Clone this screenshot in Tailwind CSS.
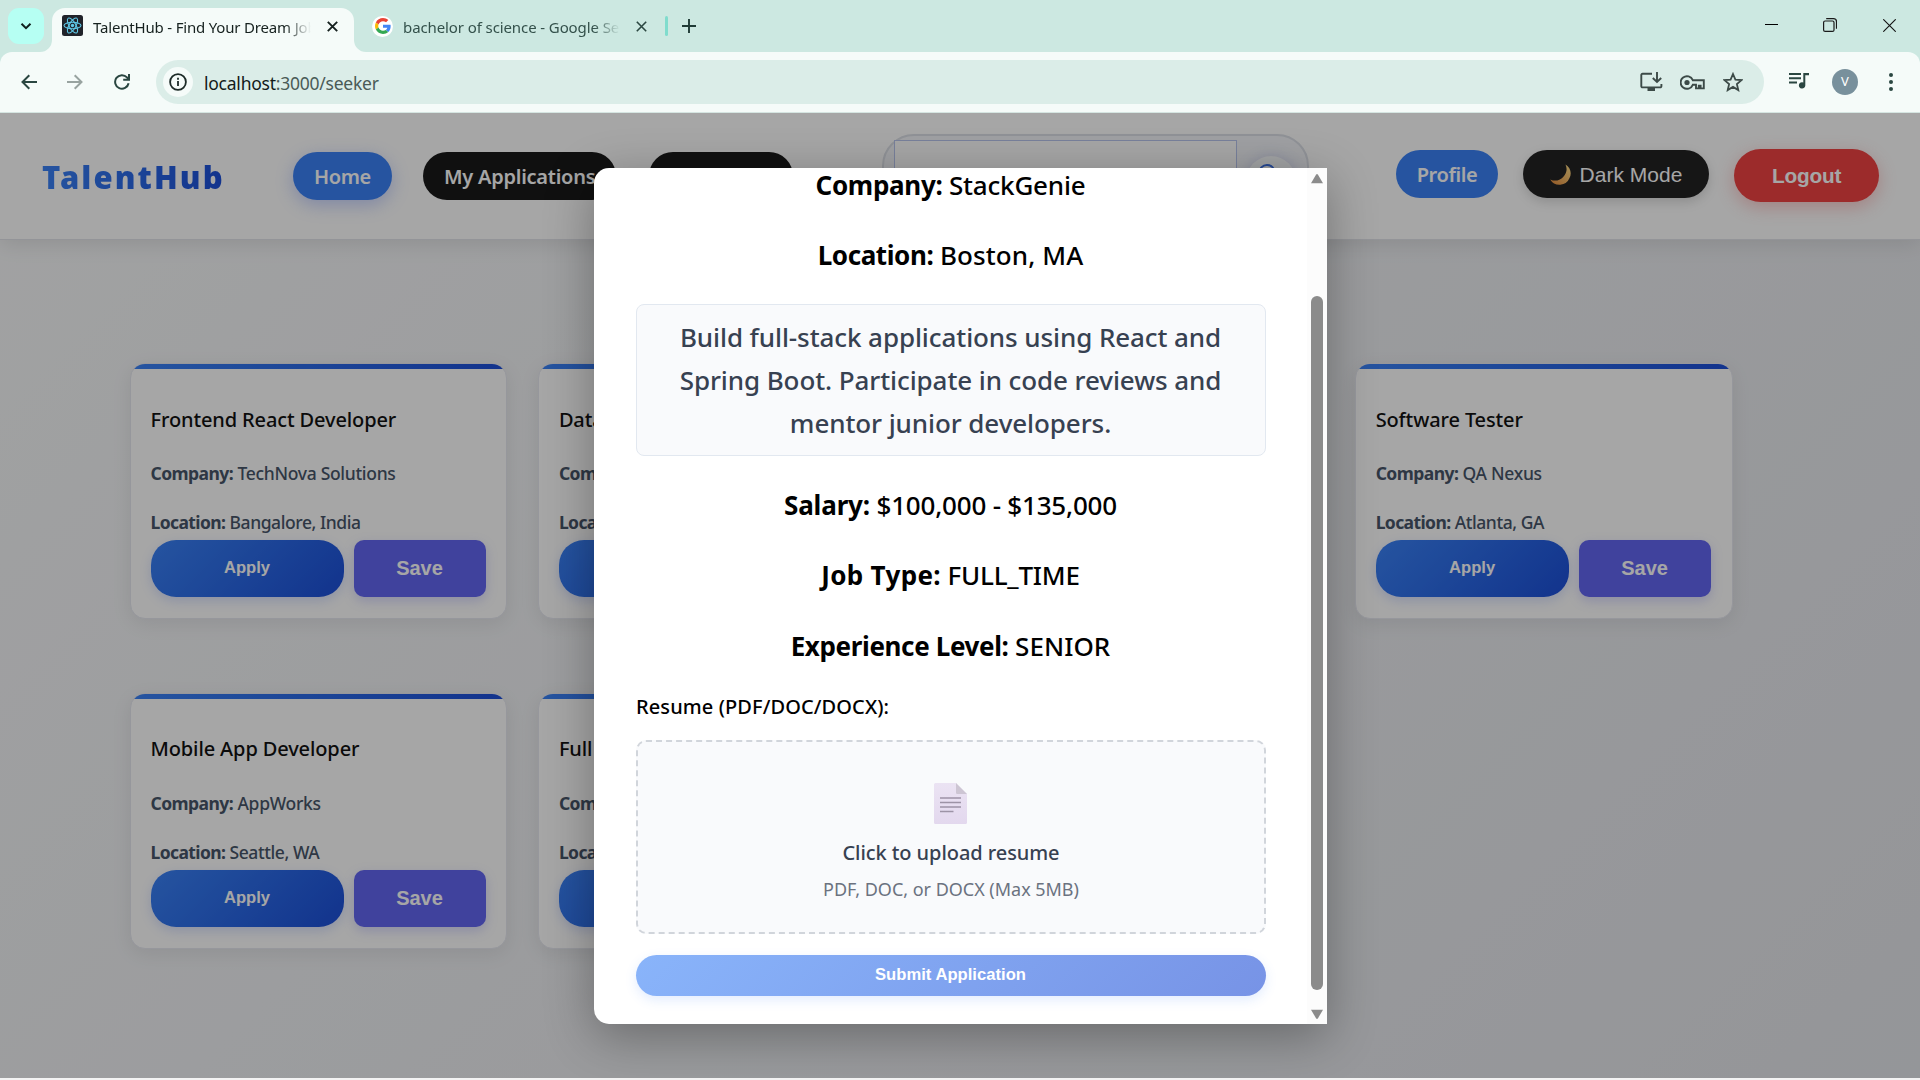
<!DOCTYPE html>
<html lang="en">
<head>
<meta charset="utf-8">
<title>TalentHub - Find Your Dream Job</title>
<script src="https://cdn.jsdelivr.net/npm/@tailwindcss/browser@4"></script>
</head>
<body class="flex h-[1080px] w-[1920px] flex-col overflow-hidden bg-[#f3f3f3] font-['Noto_Sans',sans-serif] whitespace-nowrap">

<!-- Tab strip -->
<div class="flex h-[52px] shrink-0 items-start bg-[#cce8e1] pt-2 pl-2">
  <div class="flex h-9 w-9 items-center justify-center rounded-[11px] bg-[#b6fff3]">
    <svg class="size-3" viewBox="0 0 12 12" fill="none" stroke="#10201d" stroke-width="2"><path d="M1.5 3.8 6 8.2l4.500-4.400"/></svg>
  </div>
  <div class="relative ml-2 flex h-11 w-[302px] items-center rounded-t-[13px] bg-[#f5fbf9] pb-4 pl-[10px] pt-0">
    <svg class="absolute bottom-0 -left-3 size-3" viewBox="0 0 12 12" fill="#f5fbf9"><path d="M12 0v12H0A12 12 0 0 0 12 0z"/></svg>
    <svg class="absolute bottom-0 -right-3 size-3" viewBox="0 0 12 12" fill="#f5fbf9"><path d="M0 0v12h12A12 12 0 0 1 0 0z"/></svg>
    <svg class="mt-[7px] h-[21px] w-[21px] shrink-0" viewBox="0 0 21 21"><rect width="21" height="21" rx="2.500" fill="#20232a"/><g fill="none" stroke="#5fc9e8" stroke-width="1.100"><ellipse cx="10.500" cy="10.500" rx="8.500" ry="3.300"/><ellipse cx="10.500" cy="10.500" rx="8.500" ry="3.300" transform="rotate(60 10.500 10.500)"/><ellipse cx="10.500" cy="10.500" rx="8.500" ry="3.300" transform="rotate(120 10.500 10.500)"/></g><circle cx="10.500" cy="10.500" r="1.700" fill="#5fc9e8"/></svg>
    <span class="mt-[9px] ml-[10px] w-[218px] overflow-hidden text-[15px] leading-6 tracking-[-0.18px] text-[#16211f] [mask-image:linear-gradient(to_right,black_88%,transparent)]">TalentHub - Find Your Dream Job</span>
    <svg class="mt-[8px] ml-[16px] size-[11px]" viewBox="0 0 11 11" stroke="#16211f" stroke-width="1.900"><path d="m.8.8 9.400 9.400M10.200.8.8 10.200"/></svg>
  </div>
  <div class="flex h-9 items-center pl-[18px]">
    <div class="flex size-[21px] items-center justify-center rounded-full bg-white">
      <svg class="size-[16px]" viewBox="0 0 48 48"><path fill="#EA4335" d="M24 9.500c3.540 0 6.710 1.220 9.210 3.600l6.850-6.850C35.900 2.380 30.470 0 24 0 14.620 0 6.510 5.380 2.560 13.220l7.980 6.190C12.430 13.720 17.740 9.500 24 9.500z"/><path fill="#4285F4" d="M46.980 24.550c0-1.570-.15-3.090-.38-4.550H24v9.020h12.940c-.58 2.960-2.260 5.480-4.780 7.180l7.730 6c4.510-4.180 7.090-10.360 7.090-17.650z"/><path fill="#FBBC05" d="M10.530 28.590c-.48-1.450-.76-2.990-.76-4.590s.27-3.140.76-4.590l-7.980-6.190C.92 16.460 0 20.120 0 24c0 3.880.92 7.540 2.560 10.780l7.970-6.190z"/><path fill="#34A853" d="M24 48c6.480 0 11.930-2.130 15.890-5.810l-7.730-6c-2.150 1.450-4.920 2.300-8.160 2.300-6.260 0-11.570-4.220-13.470-9.910l-7.980 6.190C6.510 42.620 14.620 48 24 48z"/></svg>
    </div>
    <span class="mt-[2px] ml-[10px] w-[217px] overflow-hidden text-[15px] leading-6 tracking-[-0.1px] text-[#34514b] [mask-image:linear-gradient(to_right,black_88%,transparent)]">bachelor of science - Google Search</span>
    <svg class="ml-[16px] size-[11px]" viewBox="0 0 11 11" stroke="#2b4741" stroke-width="1.600"><path d="m.8.8 9.400 9.400M10.200.8.8 10.200"/></svg>
    <div class="ml-[18px] h-5 w-[3px] rounded bg-[#80dccd]"></div>
    <svg class="ml-[14px] size-[14px]" viewBox="0 0 14 14" stroke="#1f3b36" stroke-width="1.900"><path d="M7 0v14M0 7h14"/></svg>
  </div>
  <div class="ml-auto flex h-[34px] items-center pr-[24px]">
    <svg class="h-[13px] w-[13px]" viewBox="0 0 13 13" stroke="#000" stroke-width="1"><path d="M0 5.500h13"/></svg>
    <svg class="ml-[45px] size-[14px]" viewBox="0 0 14 14" fill="none" stroke="#1a1a1a" stroke-width="1.200"><rect x=".6" y="3" width="10.400" height="10.400" rx="1.500"/><path d="M3.200.7h7.300a3 3 0 0 1 3 3v7"/></svg>
    <svg class="ml-[46px] size-[13px]" viewBox="0 0 13 13" stroke="#111" stroke-width="1.100"><path d="m.3.300 12.400 12.400M12.700.3.300 12.700"/></svg>
  </div>
</div>

<!-- Toolbar -->
<div class="h-[61px] shrink-0 bg-[#cce8e1]">
  <div class="flex h-[61px] items-center rounded-t-xl border-b border-[#d5e5e1] bg-[#f5fbf9]">
    <svg class="ml-[21px] size-4" viewBox="0 0 16 16" fill="none" stroke="#2a4641" stroke-width="2"><path d="M16 8H1.500M8.300 1.200 1.500 8l6.800 6.800"/></svg>
    <svg class="ml-[30px] size-4" viewBox="0 0 16 16" fill="none" stroke="#98a3a0" stroke-width="2"><path d="M0 8h14.500M7.700 1.200 14.500 8l-6.800 6.800"/></svg>
    <svg class="ml-[31px] size-4" viewBox="0 0 16 16" fill="none" stroke="#2a4641" stroke-width="2"><path d="M14.600 9.300A6.800 6.800 0 1 1 13 3.400L14.800 5.400M15 0v5.800H9.200"/></svg>
    <div class="ml-[26px] flex h-11 w-[1608px] items-center rounded-full bg-[#dbede8] pl-[7px]">
      <div class="flex size-[30px] items-center justify-center rounded-full bg-[#f5fbf9]">
        <svg class="size-[18px]" viewBox="0 0 18 18" fill="none" stroke="#1c2a27" stroke-width="1.800"><circle cx="9" cy="9" r="7.900"/><path d="M9 8v5M9 4.800v1.900"/></svg>
      </div>
      <span class="mt-px ml-[11px] text-[17.5px] leading-6 tracking-[-0.24px] text-[#4a5b57]"><span class="text-[#131b19]">localhost</span>:3000/seeker</span>
      <svg class="ml-auto h-[20px] w-[23px]" viewBox="0 0 23 20" fill="none" stroke="#3c4a47" stroke-width="1.900"><path d="M12 1.800H2.500a1.200 1.200 0 0 0-1.200 1.200v11.200a1.200 1.200 0 0 0 1.200 1.200h17.700a1.200 1.200 0 0 0 1.200-1.200V12"/><path d="M17 0v9.500M12.800 6 17 10l4.200-4"/><path d="M7.500 17.500h7.500" stroke-width="3"/></svg>
      <svg class="ml-[17px] h-[15px] w-[25px]" viewBox="0 0 25 15" fill="none" stroke="#3c4a47" stroke-width="1.900"><path d="M12.800 5.200A6.300 6.300 0 1 0 12.800 9.800H16v3.600h2.800v-2.800h1.800v2.800h3.200V5.200z"/><circle cx="7" cy="7.500" r="2.600" fill="#3c4a47" stroke="none"/></svg>
      <svg class="mr-[21px] ml-[18px] size-5" viewBox="0 0 20 20" fill="none" stroke="#3c4a47" stroke-width="1.800"><path d="m10 2 2.400 5.600 6.100.5-4.600 4 1.400 6L10 14.900 4.700 18.100l1.400-6-4.600-4 6.100-.5z"/></svg>
    </div>
    <svg class="mb-[3px] ml-[25px] h-[17px] w-[20px]" viewBox="0 0 20 17" fill="#2a4641"><path d="M0 1h12v2H0zM0 5.200h12v2H0zM0 9.400h8v2H0zM14.300 1H20v2.200h-3.700v10.200a3.200 3.200 0 1 1-2-3z"/></svg>
    <div class="ml-[23px] flex size-[26px] items-center justify-center rounded-full bg-[#78909c] text-[13px] text-white">V</div>
    <svg class="ml-[31px] h-[18px] w-1" viewBox="0 0 4 18" fill="#2a4641"><circle cx="2" cy="2" r="2"/><circle cx="2" cy="9" r="2"/><circle cx="2" cy="16" r="2"/></svg>
  </div>
</div>

<!-- Page -->
<div class="relative h-[965px] shrink-0 overflow-hidden bg-linear-135 from-[#f8f9fa] to-[#e4e6eb]">
  <nav class="flex h-[127px] items-center border-b border-[#e2e4ea] bg-white pl-[42px] shadow-[0_4px_20px_rgba(0,0,0,0.1)]">
    <span class="mt-px w-[186px] bg-linear-to-r from-[#3b82f6] to-[#1d4ed8] bg-clip-text text-[31px] leading-10 font-black tracking-[2.1px] text-transparent">TalentHub</span>
    <div class="ml-[65px] flex h-12 w-[99px] items-center justify-center rounded-[24px] bg-[#3b82f6] pt-px text-[20px] font-semibold tracking-[-0.4px] text-white shadow-[0_5px_18px_rgba(59,100,246,0.3)]">Home</div>
    <div class="ml-[31px] flex h-12 w-[193px] items-center rounded-full bg-[#191919] pt-px pl-[21px] text-[20px] font-semibold tracking-[-0.25px] text-white">My Applications</div>
    <div class="ml-[33px] h-12 w-[144px] rounded-full bg-[#191919]"></div>
    <div class="ml-[89px] flex h-[84px] w-[427px] rounded-[32px] border-2 border-[#dde1e8] bg-[#f4f6fa] pt-1 pl-[10px]">
      <div class="h-[72px] w-[343px] border border-[#b9c5ee] bg-white"></div>
      <div class="mt-4 ml-[9px] flex size-[50px] justify-center rounded-full bg-[#f8fafc] pt-[7px] shadow-[0_0_14px_rgba(59,80,200,0.18)]">
        <svg class="mr-1 size-6" viewBox="0 0 24 24" fill="none" stroke="#3b6fe0" stroke-width="2"><circle cx="10" cy="10" r="8"/><path d="m16 16 6 6"/></svg>
      </div>
    </div>
    <div class="mb-1 ml-[87px] flex h-12 w-[102px] items-center justify-center rounded-full bg-[#3b82f6] pt-px text-[20px] font-semibold tracking-[-0.4px] text-white">Profile</div>
    <div class="mb-1 ml-[25px] flex h-12 w-[186px] items-center justify-center rounded-full bg-[#222] font-['Liberation_Sans',sans-serif] text-[21px] text-white shadow-[0_4px_12px_rgba(0,0,0,0.15)]">
      <svg class="mr-[9px] size-[21px]" viewBox="0 0 21 21"><defs><linearGradient id="moon" x1="1" y1="0" x2="0" y2="1"><stop offset="0" stop-color="#ffe08a"/><stop offset="1" stop-color="#e58a3c"/></linearGradient></defs><path fill="url(#moon)" d="M15.500.4a11.500 11.500 0 0 1-15.300 15A10.800 10.800 0 0 0 19.500 14C22.200 9 20.200 3 15.500.4z"/></svg>
      <span class="pt-[2px] tracking-[0.02px]">Dark Mode</span>
    </div>
    <div class="mb-px ml-[25px] flex h-[53px] w-[145px] items-center justify-center rounded-full bg-[#f04343] pt-px font-['Liberation_Sans',sans-serif] text-[20.8px] font-bold tracking-[-0.2px] text-white shadow-[0_5px_18px_rgba(239,68,68,0.3)]">Logout</div>
  </nav>

  <main class="ml-[129.5px] grid w-[1603px] grid-cols-4 gap-x-[30.5px] gap-y-[74px] pt-[122.5px]" id="jobs"></main>

  <!-- Dimmed backdrop -->
  <div class="absolute inset-0 bg-black/35"></div>

  <!-- Application dialog -->
  <div class="absolute top-[55px] left-[594px] flex h-[856px] w-[733px] overflow-hidden rounded-l-[15px] bg-white shadow-[0_12px_50px_rgba(0,0,0,0.32)]">
    <div class="flex w-[713px] flex-col pr-[42px] pl-[42px] pt-px text-center text-[26px] leading-8 font-medium tracking-[-0.25px] text-black">
      <p class="h-8"><b class="tracking-[-0.3px]">Company:</b> <span class="tracking-[-0.2px]">StackGenie</span></p>
      <p class="mt-[38px] h-8"><b class="tracking-[-0.4px]">Location:</b> <span class="tracking-[0.1px]">Boston, MA</span></p>
      <div class="-mr-px mt-[33px] h-[152px] rounded-[8px] border border-[#e2e8f0] bg-[#f9fafc] pt-[11px] pr-px leading-[43.2px] tracking-[-0.09px] text-[#374151]">Build full-stack applications using React and<br>Spring Boot. Participate in code reviews and<br>mentor junior developers.</div>
      <p class="mt-[33px] h-8"><b class="tracking-[-0.15px]">Salary:</b> <span class="tracking-[-0.2px]">$100,000 - $135,000</span></p>
      <p class="mt-[38px] h-8"><b class="tracking-[0.35px]">Job Type:</b> <span class="tracking-[-0.2px]">FULL_TIME</span></p>
      <p class="mt-[39px] h-8"><b class="tracking-[-0.36px]">Experience Level:</b> <span class="tracking-[0.05px]">SENIOR</span></p>
      <p class="mt-[31px] h-[27px] text-left text-[20px] leading-[27px] tracking-[0.1px]">Resume (PDF/DOC/DOCX):</p>
      <div class="-mr-px mt-[20px] flex h-[194px] flex-col items-center rounded-[10px] border-2 border-dashed border-[#d1d5db] bg-[#f9fafc] pt-[41px]">
        <svg class="mr-[2px] h-[41px] w-[33px]" viewBox="0 0 33 41"><defs><linearGradient id="paper" x1="0" y1="0" x2="0" y2="1"><stop offset="0" stop-color="#ebe3f3"/><stop offset="1" stop-color="#e3d8ee"/></linearGradient></defs><path fill="url(#paper)" d="M1.500 0H22l11 11v28.500a1.500 1.500 0 0 1-1.500 1.500h-30A1.500 1.500 0 0 1 0 39.500v-38A1.500 1.500 0 0 1 1.500 0z"/><path fill="#cdc5d3" d="M22 0l11 11H23.200A1.200 1.200 0 0 1 22 9.800z"/><path stroke="#9d93a6" stroke-width="1.500" d="M6 15h21M6 19.500h21M6 24h21M6 28.500h13.500"/></svg>
        <p class="mt-[15px] h-7 text-[20px] leading-7 tracking-[-0.07px] text-[#374151]">Click to upload resume</p>
        <p class="mt-[9px] text-[18px] leading-[26px] font-normal tracking-[-0.02px] text-[#6b7280]">PDF, DOC, or DOCX (Max 5MB)</p>
      </div>
      <div class="-mr-px mt-[21px] flex h-[41px] items-center justify-center rounded-full bg-linear-135 from-[#89b4fa] to-[#7793e6] pr-px pb-px font-['Liberation_Sans',sans-serif] text-[16.6px] leading-5 font-bold tracking-[0.02px] text-white shadow-[0_4px_12px_rgba(59,130,246,0.15)]">Submit Application</div>
    </div>
    <div class="flex w-5 flex-col items-center bg-[#fcfcfc] pt-[6px]">
      <svg class="h-[10px] w-3" viewBox="0 0 12 10" fill="#8b8b8b"><path d="M5 .8 0 9.200h12L7 .8a1.200 1.200 0 0 0-2 0z"/></svg>
      <div class="mt-28 h-[694px] w-3 rounded-full bg-[#8b8b8b]"></div>
      <svg class="mt-[19px] h-[10px] w-3" viewBox="0 0 12 10" fill="#8b8b8b"><path d="M5 9.200 0 .8h12L7 9.200a1.200 1.200 0 0 1-2 0z"/></svg>
    </div>
  </div>
</div>

<script>
const jobs = [
  ['Frontend React Developer', 'TechNova Solutions', 'Bangalore, India'],
  ['Data', '', ''],
  null,
  ['Software Tester', 'QA Nexus', 'Atlanta, GA'],
  ['Mobile App Developer', 'AppWorks', 'Seattle, WA'],
  ['Full', '', ''],
];
document.getElementById('jobs').innerHTML = jobs.map((j, i) => j ? `
  <article class="h-[256px] overflow-hidden rounded-[15px] border border-[#e6e8f0] bg-white shadow-[0_5px_20px_rgba(0,0,20,0.08)]">
    <div class="h-[5px] bg-linear-to-r from-[#3b82f6] to-[#1d4ed8]"></div>
    <div class="px-5 pt-[37px]">
      <h3 class="${i > 3 ? '-mt-px mb-[29px]' : 'mb-7'} h-[27px] text-[20px] leading-[27px] font-medium tracking-[-0.12px] text-[#111]">${j[0]}</h3>
      <p class="h-6 text-[17.5px] leading-6 font-medium tracking-[-0.3px] text-[#475569]"><b class="tracking-[-0.55px]">Company:</b> ${j[1]}</p>
      <p class="mt-[25px] h-6 text-[17.5px] leading-6 font-medium tracking-[-0.42px] text-[#475569]"><b class="tracking-[-0.6px]">Location:</b> ${j[2]}</p>
      <div class="mt-[6px] flex gap-[10px] font-['Liberation_Sans',sans-serif] font-bold text-white">
        <div class="flex h-[57px] w-[193px] items-center justify-center rounded-[25px] bg-linear-135 from-[#3b82f6] to-[#1d4ed8] text-[16.6px] shadow-[0_4px_12px_rgba(59,100,246,0.2)]">${j[1] && 'Apply'}</div>
        <div class="flex h-[57px] w-[132px] items-center justify-center rounded-[10px] bg-[#6366f1] text-[20px] shadow-[0_4px_12px_rgba(99,102,241,0.25)]">${j[1] && 'Save'}</div>
      </div>
    </div>
  </article>` : '<div></div>').join('');
</script>
</body>
</html>
